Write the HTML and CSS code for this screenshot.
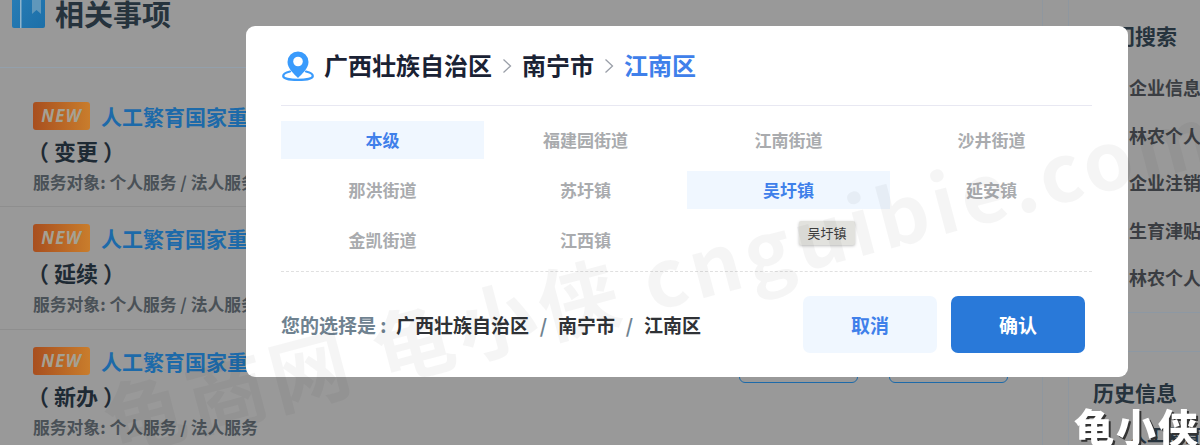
FILE: index.html
```html
<!DOCTYPE html>
<html lang="zh-CN">
<head>
<meta charset="utf-8">
<title>相关事项</title>
<link rel="stylesheet" href="styles.css">
</head>
<body>
<div class="page">
  <main class="main">
    <header class="main-head">
      <svg class="book" viewBox="0 0 33 44" width="33" height="44"><defs><linearGradient id="bk" x1="0" y1="0" x2="1" y2="1"><stop offset="0" stop-color="#2a7fb8"/><stop offset="1" stop-color="#1c6fa8"/></linearGradient></defs><rect width="33" height="44" rx="2" fill="url(#bk)"/><rect x="8" width="1.500" height="44" fill="#8fb4cc"/><path d="M20 0h9v30l-4.500-4-4.500 4z" fill="#5f97bb"/></svg>
      <h1 class="main-title">相关事项</h1>
    </header>
    <article class="item item-first">
      <div class="item-line"><span class="badge">NEW</span><a class="item-link">人工繁育国家重点保护野生动物许可证核发</a></div>
      <div class="item-sub">（ 变更 ）</div>
      <div class="item-meta">服务对象: 个人服务 / 法人服务</div>
    </article>
    <article class="item">
      <div class="item-line"><span class="badge">NEW</span><a class="item-link">人工繁育国家重点保护野生动物许可证核发</a></div>
      <div class="item-sub">（ 延续 ）</div>
      <div class="item-meta">服务对象: 个人服务 / 法人服务</div>
    </article>
    <article class="item item-last">
      <div class="item-line"><span class="badge">NEW</span><a class="item-link">人工繁育国家重点保护野生动物许可证核发</a></div>
      <div class="item-sub">（ 新办 ）</div>
      <div class="item-meta">服务对象: 个人服务 / 法人服务</div>
      <div class="item-actions"><span class="ghost"></span><span class="ghost"></span></div>
    </article>
  </main>
  <aside class="side">
    <section class="hot">
      <h2 class="side-title">热门搜索</h2>
      <ul class="hot-list">
        <li>企业信息变更</li>
        <li>林农个人贷款</li>
        <li>企业注销登记</li>
        <li>生育津贴申领</li>
        <li>林农个人贷款</li>
      </ul>
    </section>
    <div class="side-gap"></div>
    <section class="history">
      <h2 class="side-title">历史信息</h2>
      <div class="history-row">人工繁育国家</div>
    </section>
  </aside>
</div>

<div class="modal">
  <div class="crumbs">
    <svg class="pin" viewBox="0 0 32 30" width="32" height="30"><path d="M16 0.500a10.500 10.500 0 0 0-10.500 10.500c0 6.500 7 12.500 10.500 16 3.500-3.500 10.500-9.500 10.500-16a10.500 10.500 0 0 0-10.500-10.500z" fill="#3a9bfc"/><circle cx="16" cy="10.500" r="4.800" fill="#fff"/><path d="M8 20.500c-4.200 1-6.800 2.600-6.800 4.400 0 2.500 6.600 4 14.800 4s14.800-1.500 14.800-4c0-1.800-2.600-3.400-6.800-4.400" fill="none" stroke="#3a9bfc" stroke-width="2.200" stroke-linecap="round"/></svg>
    <span class="crumb">广西壮族自治区</span>
    <svg class="chev" viewBox="0 0 10 16" width="10" height="16"><path d="M1.500 1.500l7 6.500-7 6.500" fill="none" stroke="#9a9fa8" stroke-width="1.300"/></svg>
    <span class="crumb">南宁市</span>
    <svg class="chev" viewBox="0 0 10 16" width="10" height="16"><path d="M1.500 1.500l7 6.500-7 6.500" fill="none" stroke="#9a9fa8" stroke-width="1.300"/></svg>
    <span class="crumb crumb-on">江南区</span>
  </div>
  <div class="areas">
    <div class="area area-on">本级</div>
    <div class="area">福建园街道</div>
    <div class="area">江南街道</div>
    <div class="area">沙井街道</div>
    <div class="area">那洪街道</div>
    <div class="area">苏圩镇</div>
    <div class="area area-on">吴圩镇</div>
    <div class="area">延安镇</div>
    <div class="area">金凯街道</div>
    <div class="area">江西镇</div>
  </div>
  <div class="foot">
    <div class="choice"><span class="choice-label">您的选择是 :</span><span>广西壮族自治区</span><i class="slash">/</i><span>南宁市</span><i class="slash">/</i><span>江南区</span></div>
    <div class="btns">
      <button class="btn btn-soft">取消</button>
      <button class="btn btn-main">确认</button>
    </div>
  </div>
  <div class="tip">吴圩镇</div>
</div>

<div class="wm-layer"><div class="wm">龟商网 龟小侠 cnguibie.com</div></div>
<div class="logo">龟小侠</div>
</body>
</html>
```
FILE: styles.css
```css
* { box-sizing: border-box; }
html, body { margin: 0; height: 100%; overflow: hidden; }
body {
  background: #999;
  font-family: "Noto Sans CJK SC", "Noto Sans", sans-serif;
  font-weight: 700;
}
.page {
  display: flex;
  margin-top: -20px;
  height: 465px;
  overflow: hidden;
}
.main {
  width: 1043px;
  flex: none;
  border-right: 1px solid #8f979f;
}
.main-head {
  display: flex;
  align-items: center;
  gap: 10px;
  height: 88px;
  padding: 0 0 20px 12px;
  border-bottom: 1px solid #93a0ac;
}
.book { margin-bottom: 16px; flex: none; }
.main-title {
  margin: 0 0 2px;
  font-size: 29px;
  line-height: 40px;
  color: #26333d;
}
.item {
  height: 123px;
  padding: 16px 33px 0;
  border-bottom: 1px solid #8e8e8e;
}
.item-first {
  height: 139px;
  padding-top: 33px;
}
.item-last { border-bottom: 0; }
.item-line {
  display: flex;
  align-items: center;
  height: 30px;
  gap: 11px;
}
.badge {
  width: 57px;
  height: 28px;
  border-radius: 3px;
  background: linear-gradient(90deg, #a84f1f, #c97d2c);
  color: #a5a193;
  font: italic 700 17px/28px "Noto Sans", sans-serif;
  letter-spacing: 1px;
  text-align: center;
}
.item-link {
  color: #1d6aa9;
  font-size: 21px;
  line-height: 30px;
  white-space: nowrap;
}
.item-sub {
  margin-top: 4px;
  margin-left: -6px;
  color: #1e2a34;
  font-size: 22px;
  line-height: 30px;
}
.item-meta {
  margin-top: 6px;
  color: #4a5157;
  font-size: 16.800px;
  line-height: 22px;
}
.item-actions {
  display: flex;
  justify-content: flex-end;
  gap: 31px;
  margin: -88px 1px 0 0;
}
.ghost {
  width: 119px;
  height: 33px;
  border: 1px solid #1d6aa9;
  border-radius: 6px;
}
.side {
  margin-left: 25px;
  flex: 1;
  min-width: 0;
  border-left: 1px solid #8f979f;
  padding-left: 24px;
  overflow: hidden;
  white-space: nowrap;
}
.hot {
  padding-top: 39px;
  height: 333px;
  border-bottom: 1px solid #8d98a3;
  margin-left: -24px;
  padding-left: 24px;
}
.side-title {
  margin: 0;
  font-size: 21px;
  line-height: 32px;
  color: #26333d;
}
.hot-list {
  list-style: none;
  margin: 13px 0 0 36px;
  padding: 0;
  color: #3a3d42;
  font-size: 18px;
}
.hot-list li { height: 47.500px; line-height: 47.500px; }
.side-gap {
  height: 39px;
  margin-left: -24px;
  border-bottom: 1px solid #8d98a3;
}
.history { padding-top: 24px; }
.history-row {
  margin: 14px 0 0 36px;
  font-size: 18px;
  line-height: 24px;
  color: #26333d;
}
.modal {
  position: absolute;
  left: 246px;
  top: 26px;
  width: 882px;
  height: 351px;
  padding: 0 36px 0 35px;
  background: #fff;
  border-radius: 9px;
}
.crumbs {
  display: flex;
  align-items: center;
  height: 80px;
  border-bottom: 1px solid #e8e8f2;
  padding: 0 0 1px 1px;
  color: #1a2234;
  font-size: 24px;
  line-height: 34px;
}
.pin { margin-right: 10px; margin-top: 2px; flex: none; }
.chev { margin: 2px 10px 0 10px; flex: none; }
.crumb-on { color: #3f80ea; }
.areas {
  display: grid;
  grid-template-columns: repeat(4, 203px);
  grid-auto-rows: 38px;
  row-gap: 12px;
  margin-top: 15px;
  border-bottom: 1px dashed #e0e0e0;
  box-sizing: content-box;
  height: 150px;
}
.area {
  text-align: center;
  color: #a9abae;
  font-size: 17px;
  line-height: 38px;
}
.area-on {
  background: #f0f7ff;
  color: #3f80ea;
}
.foot {
  display: flex;
  align-items: center;
  justify-content: space-between;
  height: 57px;
  margin-top: 24px;
  padding-right: 7px;
}
.choice {
  color: #2f3236;
  font-size: 19px;
  line-height: 26px;
  white-space: nowrap;
}
.choice-label {
  display: inline-block;
  width: 115px;
  color: #6f8290;
}
.slash {
  display: inline-block;
  width: 29px;
  font-style: normal;
  text-align: center;
  color: #6f8290;
}
.btns { display: flex; gap: 14px; }
.btn {
  width: 134px;
  height: 57px;
  border: 0;
  border-radius: 7px;
  font: 700 19px "Noto Sans CJK SC", sans-serif;
}
.btn-soft { background: #f0f7ff; color: #3f80ea; }
.btn-main { background: #2979d9; color: #fff; }
.tip {
  position: absolute;
  left: 553px;
  top: 195px;
  width: 56px;
  height: 24px;
  background: #e2e2de;
  border-radius: 2px;
  box-shadow: 0 1px 3px rgba(0,0,0,.25);
  color: #3c3c3c;
  font-size: 13px;
  font-weight: 400;
  line-height: 24px;
  text-align: center;
}
.wm-layer {
  position: fixed;
  inset: 0;
  overflow: hidden;
  pointer-events: none;
}
.wm {
  position: absolute;
  left: 105px;
  top: 370px;
  white-space: nowrap;
  color: rgba(0,0,0,.04);
  font: 700 80px/100px "Noto Sans CJK SC", sans-serif;
  transform: rotate(-14.800deg);
  transform-origin: left center;
  letter-spacing: 5px;
}
.logo {
  position: absolute;
  right: 0;
  bottom: 0;
  height: 38px;
  overflow: hidden;
  color: #fff;
  font-size: 40px;
  font-weight: 900;
  line-height: 38px;
  letter-spacing: 2px;
  text-shadow: 2px 2px 0 #333;
  white-space: nowrap;
}
```
